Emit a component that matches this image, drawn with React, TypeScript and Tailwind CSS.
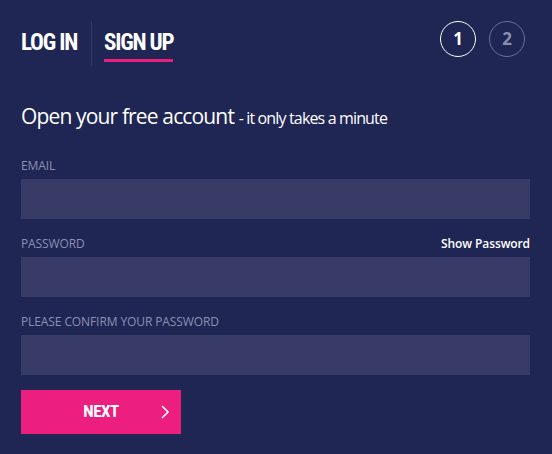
import React, { useState } from "react";

const Field = ({ label, extra }: { label: string; extra?: React.ReactNode }) => {
  return (
    <div className="flex flex-col">
      <div className="flex items-end justify-between h-[16px]">
        <span className="text-[12px] leading-[16px] text-[#8d90b3] uppercase tracking-[-0.1px]">{label}</span>
        {extra}
      </div>
      <input className="mt-[5px] h-[40px] w-full bg-[#383b65] outline-none px-3 text-white text-[14px]" />
    </div>
  );
};

export default function App() {
  const [showPassword, setShowPassword] = useState(false);

  return (
    <div
      className="w-[552px] h-[454px] bg-[#1f2654] pl-[21px] pr-[22px] pt-[21px] text-white"
      style={{ fontFamily: '"Open Sans", sans-serif' }}
    >
      <div className="flex justify-between items-start">
        <div
          className="flex h-[45px] font-bold text-[23px] leading-[23px] tracking-[-1.2px]"
          style={{ fontFamily: '"Liberation Sans Narrow", "Roboto Condensed", Roboto, sans-serif' }}
        >
          <span className="pt-[10px]">LOG IN</span>
          <div className="w-px bg-[#353c69] ml-[14px] mr-[12px]" />
          <div className="pt-[10px] flex flex-col items-start">
            <span>SIGN UP</span>
            <div className="mt-[5px] h-[3px] w-full bg-[#ec1e7e]" />
          </div>
        </div>
        <div className="flex gap-[13px] mr-[5px]">
          <div className="w-[36px] h-[36px] rounded-full border border-white flex items-center justify-center text-[17px] font-bold">
            1
          </div>
          <div className="w-[36px] h-[36px] rounded-full border border-[#6c7097] text-[#8a8db0] flex items-center justify-center text-[17px] font-bold">
            2
          </div>
        </div>
      </div>

      <h1 className="mt-[35px] text-[21px] leading-[30px] tracking-[-0.85px]">
        Open your free account <span className="text-[16px] tracking-[-0.85px]">- it only takes a minute</span>
      </h1>

      <div className="mt-[25px] flex flex-col gap-[17px]">
        <Field label="Email" />
        <Field
          label="Password"
          extra={
            <button
              onClick={() => setShowPassword(!showPassword)}
              className="text-[12px] leading-[16px] font-semibold text-white tracking-[-0.1px]"
            >
              Show Password
            </button>
          }
        />
        <Field label="Please confirm your password" />
      </div>

      <button className="mt-[15px] w-[160px] h-[44px] bg-[#ec1e7e] relative flex items-center justify-center">
        <span
          className="font-bold text-[17px] tracking-[-0.5px]"
          style={{ fontFamily: '"Liberation Sans Narrow", "Roboto Condensed", Roboto, sans-serif' }}
        >
          NEXT
        </span>
        <svg className="absolute right-[12px] top-[15px]" width="8" height="14" viewBox="0 0 8 14" fill="none">
          <path d="M1 1l6 6-6 6" stroke="white" strokeWidth="1.6" />
        </svg>
      </button>
    </div>
  );
}
